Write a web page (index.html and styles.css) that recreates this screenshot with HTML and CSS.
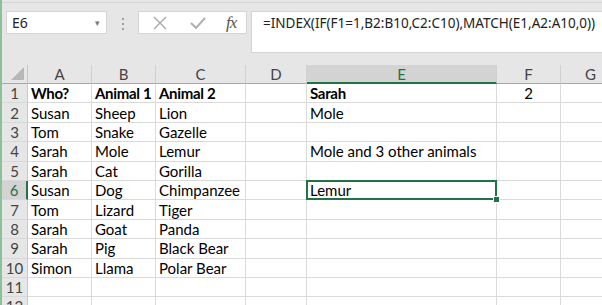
FILE: index.html
```html
<!DOCTYPE html>
<html lang="en">
<head>
  <meta charset="UTF-8">
  <title>Book1 - Excel</title>
  <link rel="stylesheet" href="styles.css">
</head>
<body>
  <div class="window">
    <div class="formula-bar">
      <div class="name-box">
        <span>E6</span>
        <span class="drop">&#9662;</span>
      </div>
      <div class="grip"><i></i><i></i><i></i></div>
      <div class="fx-box">
        <svg class="icon" width="14" height="14" viewBox="0 0 14 14">
          <path d="M1 1 L13 13 M13 1 L1 13" stroke="#a6a6a6" stroke-width="1.3" fill="none"/>
        </svg>
        <svg class="icon" width="16" height="12" viewBox="0 0 16 12">
          <path d="M1 6 L6 11 L15 1" stroke="#b0b0b0" stroke-width="2" fill="none"/>
        </svg>
        <span class="fx">fx</span>
      </div>
      <div class="formula">=INDEX(IF(F1=1,B2:B10,C2:C10),MATCH(E1,A2:A10,0))</div>
    </div>

    <div class="sheet">
      <div class="corner"><span class="tri"></span></div>
      <div class="col-head">A</div>
      <div class="col-head">B</div>
      <div class="col-head">C</div>
      <div class="col-head">D</div>
      <div class="col-head active">E</div>
      <div class="col-head">F</div>
      <div class="col-head">G</div>

      <div class="row-head">1</div>
      <div class="cell bold">Who?</div>
      <div class="cell bold">Animal 1</div>
      <div class="cell bold">Animal 2</div>
      <div class="cell"></div>
      <div class="cell bold">Sarah</div>
      <div class="cell center">2</div>
      <div class="cell"></div>

      <div class="row-head">2</div>
      <div class="cell">Susan</div>
      <div class="cell">Sheep</div>
      <div class="cell">Lion</div>
      <div class="cell"></div>
      <div class="cell">Mole</div>
      <div class="cell"></div>
      <div class="cell"></div>

      <div class="row-head">3</div>
      <div class="cell">Tom</div>
      <div class="cell">Snake</div>
      <div class="cell">Gazelle</div>
      <div class="cell"></div>
      <div class="cell"></div>
      <div class="cell"></div>
      <div class="cell"></div>

      <div class="row-head">4</div>
      <div class="cell">Sarah</div>
      <div class="cell">Mole</div>
      <div class="cell">Lemur</div>
      <div class="cell"></div>
      <div class="cell">Mole and 3 other animals</div>
      <div class="cell"></div>
      <div class="cell"></div>

      <div class="row-head">5</div>
      <div class="cell">Sarah</div>
      <div class="cell">Cat</div>
      <div class="cell">Gorilla</div>
      <div class="cell"></div>
      <div class="cell"></div>
      <div class="cell"></div>
      <div class="cell"></div>

      <div class="row-head active">6</div>
      <div class="cell">Susan</div>
      <div class="cell">Dog</div>
      <div class="cell">Chimpanzee</div>
      <div class="cell"></div>
      <div class="cell selected">Lemur</div>
      <div class="cell"></div>
      <div class="cell"></div>

      <div class="row-head">7</div>
      <div class="cell">Tom</div>
      <div class="cell">Lizard</div>
      <div class="cell">Tiger</div>
      <div class="cell"></div>
      <div class="cell"></div>
      <div class="cell"></div>
      <div class="cell"></div>

      <div class="row-head">8</div>
      <div class="cell">Sarah</div>
      <div class="cell">Goat</div>
      <div class="cell">Panda</div>
      <div class="cell"></div>
      <div class="cell"></div>
      <div class="cell"></div>
      <div class="cell"></div>

      <div class="row-head">9</div>
      <div class="cell">Sarah</div>
      <div class="cell">Pig</div>
      <div class="cell">Black Bear</div>
      <div class="cell"></div>
      <div class="cell"></div>
      <div class="cell"></div>
      <div class="cell"></div>

      <div class="row-head">10</div>
      <div class="cell">Simon</div>
      <div class="cell">Llama</div>
      <div class="cell">Polar Bear</div>
      <div class="cell"></div>
      <div class="cell"></div>
      <div class="cell"></div>
      <div class="cell"></div>

      <div class="row-head">11</div>
      <div class="cell"></div>
      <div class="cell"></div>
      <div class="cell"></div>
      <div class="cell"></div>
      <div class="cell"></div>
      <div class="cell"></div>
      <div class="cell"></div>

      <div class="row-head">12</div>
      <div class="cell"></div>
      <div class="cell"></div>
      <div class="cell"></div>
      <div class="cell"></div>
      <div class="cell"></div>
      <div class="cell"></div>
      <div class="cell"></div>
    </div>
  </div>
</body>
</html>
```

FILE: styles.css
```css
html, body {
  margin: 0;
  padding: 0;
}

body {
  width: 602px;
  height: 305px;
  overflow: hidden;
  background-color: #e6e6e6;
}

.window {
  height: 305px;
  border-left: 2px solid #8fbe9c;
  box-sizing: border-box;
}

/* formula bar */

.formula-bar {
  display: flex;
  align-items: flex-start;
  height: 65px;
  padding-top: 11px;
  box-sizing: border-box;
  background: linear-gradient(#e6e6e6 0, #e6e6e6 2px, #d6d6d6 2px, #d6d6d6 3px, #e6e6e6 3px);
  font-family: "Noto Sans", sans-serif;
}

.name-box {
  display: flex;
  align-items: center;
  justify-content: space-between;
  width: 101px;
  height: 23px;
  margin-left: 4px;
  padding: 0 6px 0 5px;
  box-sizing: border-box;
  background-color: #ffffff;
  border: 1px solid #d4d4d4;
  font-size: 14px;
  color: #222;
}

.name-box .drop {
  font-size: 9px;
  color: #777;
}

.grip {
  display: flex;
  flex-direction: column;
  gap: 3px;
  width: 31px;
  align-items: center;
  padding-top: 7px;
}

.grip i {
  display: block;
  width: 2px;
  height: 2px;
  background-color: #a0a0a0;
}

.fx-box {
  display: flex;
  align-items: center;
  width: 109px;
  height: 23px;
  box-sizing: border-box;
  background-color: #ffffff;
  border: 1px solid #d4d4d4;
}

.fx-box .icon:first-child {
  margin-left: 14px;
}

.fx-box .icon:nth-child(2) {
  margin-left: 23px;
}

.fx {
  margin-left: 20px;
  font-family: "Liberation Serif", serif;
  font-style: italic;
  font-size: 17px;
  color: #555;
  letter-spacing: -1px;
}

.formula {
  flex: 1;
  height: 42px;
  margin-left: 4px;
  padding: 1px 0 0 11px;
  box-sizing: border-box;
  background-color: #ffffff;
  border: 1px solid #d4d4d4;
  border-right: none;
  font-size: 13.5px;
  line-height: 20px;
  color: #222;
  white-space: nowrap;
}

/* sheet grid */

.sheet {
  display: grid;
  grid-template-columns: 26px 64px 64px 90px 61px 190px 64px 60px;
  grid-template-rows: 19px repeat(12, 19.4px);
  background-color: #ffffff;
  font-family: "Lato", sans-serif;
  font-size: 15px;
  color: #000;
}

.corner,
.col-head,
.row-head {
  background-color: #e6e6e6;
  color: #444;
  box-sizing: border-box;
}

.corner {
  position: relative;
  border-right: 1px solid #c8c8c8;
  border-bottom: 1px solid #a8a8a8;
}

.tri {
  position: absolute;
  right: 3px;
  bottom: 3px;
  width: 0;
  height: 0;
  border-left: 13px solid transparent;
  border-bottom: 13px solid #b7b7b7;
}

.col-head {
  display: flex;
  align-items: center;
  justify-content: center;
  border-right: 1px solid #d0d0d0;
  border-bottom: 1px solid #a8a8a8;
}

.col-head.active {
  background-color: #d3d3d3;
  color: #217346;
  border-bottom: 2px solid #217346;
}

.row-head {
  display: flex;
  align-items: center;
  justify-content: center;
  border-right: 1px solid #c8c8c8;
  border-bottom: 1px solid #d8d8d8;
}

.row-head.active {
  background-color: #d3d3d3;
  color: #217346;
  border-right: 2px solid #217346;
}

.cell {
  display: flex;
  align-items: center;
  padding: 0 3px;
  box-sizing: border-box;
  border-right: 1px solid #dadada;
  border-bottom: 1px solid #dadada;
  white-space: nowrap;
}

.cell.bold {
  font-weight: bold;
  letter-spacing: -0.3px;
}

.cell.center {
  justify-content: center;
}

.cell.selected {
  position: relative;
}

.cell.selected::after {
  content: "";
  position: absolute;
  left: -1px;
  top: -1px;
  right: -1px;
  bottom: -1px;
  border: 2px solid #217346;
}

.cell.selected::before {
  content: "";
  position: absolute;
  right: -4px;
  bottom: -4px;
  width: 5px;
  height: 5px;
  background-color: #217346;
  border: 1px solid #ffffff;
  z-index: 1;
}
```
